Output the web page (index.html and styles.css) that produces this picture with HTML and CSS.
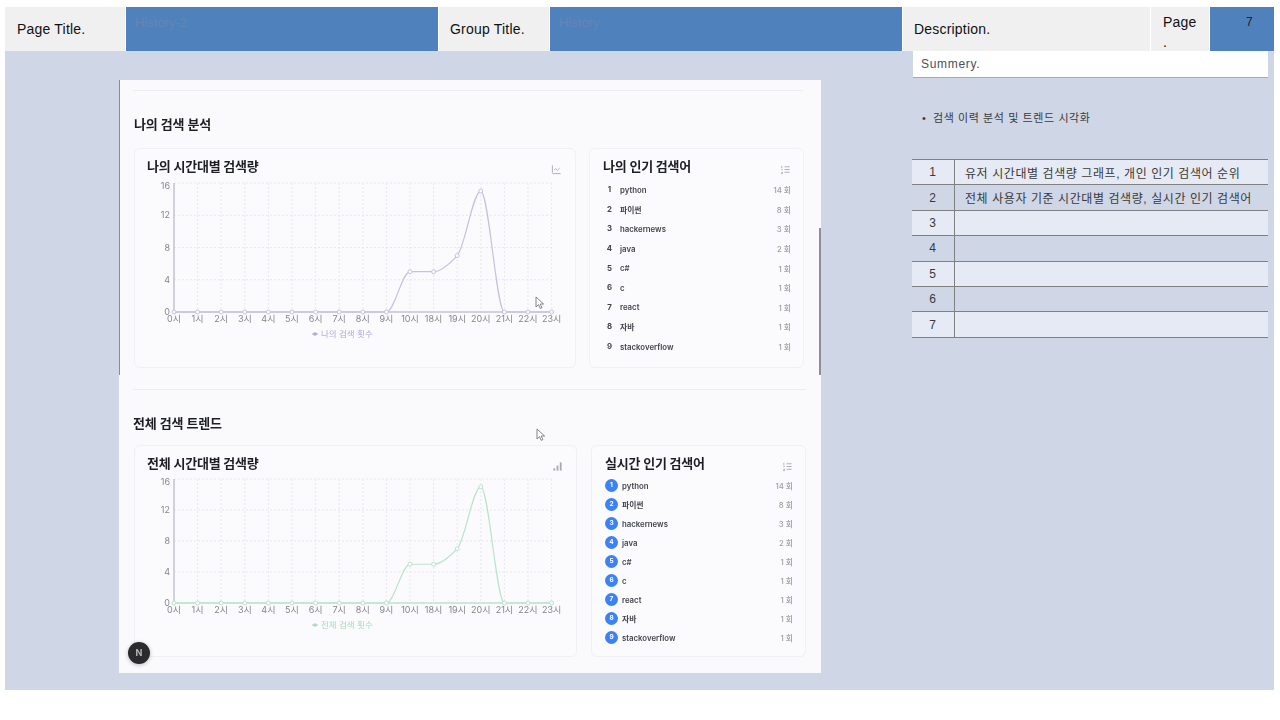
FILE: index.html
```html
<!DOCTYPE html>
<html lang="ko">
<head>
    <title>History-2</title>
    <meta charset="utf-8">
    <link rel="stylesheet" href="styles.css">
</head>
<body>
    <header class="top-bar">
        <div class="label">Page Title.</div>
        <div class="value">History-2</div>
        <div class="label label-group">Group Title.</div>
        <div class="value">History</div>
        <div class="label label-desc">Description.</div>
        <div class="label label-page">Page .</div>
        <div class="page-num">7</div>
    </header>

    <main class="sheet">
        <div class="stage">
            <div class="shot">
                <span class="shot-edge"></span>
                <span class="shot-scroll"></span>

                <hr class="rule">
                <h2 class="section-title">나의 검색 분석</h2>
                <div class="board board-my">
                    <section class="card chart-card">
                        <div class="card-head">
                            <h3>나의 시간대별 검색량</h3>
                            <svg class="icon" viewBox="0 0 24 24"><path d="M3 3v16a2 2 0 0 0 2 2h16"/><path d="m19 9-5 5-4-4-3 3"/></svg>
                        </div>
                        <svg class="chart" id="my-chart"></svg>
                    </section>
                    <section class="card list-card">
                        <div class="card-head">
                            <h3>나의 인기 검색어</h3>
                            <svg class="icon" viewBox="0 0 24 24"><path d="M10 6h11"/><path d="M10 12h11"/><path d="M10 18h11"/><path d="M4 4v5"/><path d="M3 18h3l-3 3h3"/><path d="M3 12h3"/></svg>
                        </div>
                        <ol class="rank-list" id="my-list"></ol>
                    </section>
                </div>

                <hr class="rule rule-wide">
                <h2 class="section-title section-title-all">전체 검색 트렌드</h2>
                <div class="board board-all">
                    <section class="card chart-card">
                        <div class="card-head">
                            <h3>전체 시간대별 검색량</h3>
                            <svg class="icon icon-bars" viewBox="0 0 24 24"><path d="M5 21v-5"/><path d="M12 21V10"/><path d="M19 21V3"/></svg>
                        </div>
                        <svg class="chart" id="all-chart"></svg>
                    </section>
                    <section class="card list-card">
                        <div class="card-head">
                            <h3>실시간 인기 검색어</h3>
                            <svg class="icon" viewBox="0 0 24 24"><path d="M10 6h11"/><path d="M10 12h11"/><path d="M10 18h11"/><path d="M4 4v5"/><path d="M3 18h3l-3 3h3"/><path d="M3 12h3"/></svg>
                        </div>
                        <ol class="rank-list rank-list-live" id="all-list"></ol>
                    </section>
                </div>

                <svg class="cursor cursor-a" viewBox="0 0 10 14"><path d="M1 1v10l2.5-2.4 1.7 3.8 1.7-.8-1.7-3.6H8.6z"/></svg>
                <svg class="cursor cursor-b" viewBox="0 0 10 14"><path d="M1 1v10l2.5-2.4 1.7 3.8 1.7-.8-1.7-3.6H8.6z"/></svg>
                <span class="next-badge">N</span>
            </div>
        </div>

        <aside class="side">
            <div class="summary">Summery.</div>
            <p class="note">• <span>검색 이력 분석 및 트렌드 시각화</span></p>
            <table class="steps">
                <tr><td>1</td><td>유저 시간대별 검색량 그래프, 개인 인기 검색어 순위</td></tr>
                <tr><td>2</td><td>전체 사용자 기준 시간대별 검색량, 실시간 인기 검색어</td></tr>
                <tr><td>3</td><td></td></tr>
                <tr><td>4</td><td></td></tr>
                <tr><td>5</td><td></td></tr>
                <tr><td>6</td><td></td></tr>
                <tr><td>7</td><td></td></tr>
            </table>
        </aside>
    </main>

    <script src="script.js"></script>
</body>
</html>
```

FILE: styles.css
```css
body {
    font-family: "Liberation Sans", "Noto Sans CJK KR", sans-serif;
    background-color: white;
    margin: 0;
    padding: 7px 6px 0 5px;
}
.top-bar {
    display: grid;
    grid-template-columns: 120px 312px 110px 352px 247px 58px 64px;
    column-gap: 1px;
    height: 44px;
}
.label {
    background-color: #f0f0f0;
    color: #111;
    font-size: 14px;
    line-height: 44px;
    padding-left: 12px;
    letter-spacing: 0.2px;
}
.label-group,
.label-desc {
    padding-left: 11px;
}
.label-page {
    line-height: 20px;
    padding: 5px 12px 0;
    overflow: hidden;
}
.value {
    background-color: #4f81bd;
    color: #6486b5;
    font-size: 13px;
    line-height: 32px;
    padding-left: 9px;
}
.page-num {
    background-color: #4f81bd;
    color: #222;
    font-size: 12px;
    line-height: 30px;
    padding-left: 36px;
}
.sheet {
    display: flex;
    height: 639px;
    background-color: #cfd6e6;
}
.stage {
    flex: 0 0 907px;
    padding: 29px 0 0 114px;
    box-sizing: border-box;
}
.shot {
    position: relative;
    width: 702px;
    height: 593px;
    box-sizing: border-box;
    padding: 10px 15px 0 14px;
    background-color: #fafafd;
    font-family: Inter, "Noto Sans CJK KR", sans-serif;
    filter: blur(0.5px);
}
.shot-edge {
    position: absolute;
    left: 0;
    top: 0;
    width: 1px;
    height: 295px;
    background-color: #8f8b8b;
}
.shot-scroll {
    position: absolute;
    right: 0;
    top: 148px;
    width: 2px;
    height: 147px;
    background-color: #8e8e99;
}
.rule {
    border: none;
    height: 1px;
    margin: 0 3px 0 0;
    background-color: #ecedf1;
}
.rule-wide {
    margin: 21px 0 0 0;
}
.section-title {
    margin: 23px 0 14px 1px;
    font-size: 13px;
    line-height: 20px;
    color: #1d1f25;
    letter-spacing: -0.1px;
}
.section-title-all {
    margin-bottom: 12px;
    margin-left: 0;
}
.board {
    display: grid;
    margin-left: 1px;
}
.board-my {
    grid-template-columns: 442px 215px;
    column-gap: 13px;
    height: 220px;
}
.board-all {
    grid-template-columns: 443px 215px;
    column-gap: 14px;
    height: 212px;
}
.card {
    background-color: #fbfbfe;
    border: 1px solid #f1f1f5;
    border-radius: 6px;
    box-sizing: border-box;
    padding: 7px 13px 0 12px;
}
.list-card {
    padding-left: 13px;
    padding-right: 12px;
}
.card-head {
    display: flex;
    justify-content: space-between;
    height: 22px;
}
.card-head h3 {
    margin: 0;
    font-size: 13px;
    line-height: 20px;
    color: #1d1f25;
    letter-spacing: -0.2px;
}
.icon {
    width: 11px;
    height: 11px;
    margin-top: 8px;
    fill: none;
    stroke: #a9a9b2;
    stroke-width: 2;
}
.icon-bars {
    stroke-width: 4;
}
.chart {
    display: block;
    width: 416px;
    height: 170px;
    overflow: visible;
}
.chart text {
    font-family: Inter, "Noto Sans CJK KR", sans-serif;
}
.grid-line {
    stroke: #e7e7ed;
    stroke-width: 1;
    stroke-dasharray: 2 2;
}
.axis-line {
    stroke: #c3c3d0;
    stroke-width: 1.5;
}
.tick {
    font-size: 9px;
    fill: #85858d;
}
.legend {
    font-size: 8.5px;
}
.rank-list {
    list-style: none;
    margin: 2px 0 0;
    padding: 0;
}
.rank-list li {
    display: flex;
    align-items: center;
    height: 19.6px;
    font-size: 7.8px;
    color: #43454d;
    font-weight: 600;
}
.rank {
    width: 13px;
    height: 13px;
    line-height: 13px;
    margin-right: 4px;
    text-align: center;
    font-weight: 700;
}
.term {
    flex: 1;
}
.count {
    color: #9c9ca4;
    font-weight: 500;
}
.rank-list-live {
    margin-top: 1px;
}
.rank-list-live li {
    height: 19px;
}
.rank-list-live .rank {
    border-radius: 50%;
    background-color: #3b82f6;
    color: white;
    font-size: 6.5px;
}
.cursor {
    position: absolute;
    width: 10px;
    height: 14px;
    fill: white;
    stroke: #777;
    stroke-width: 0.9;
}
.cursor-a {
    left: 416px;
    top: 216px;
}
.cursor-b {
    left: 417px;
    top: 348px;
}
.next-badge {
    position: absolute;
    left: 9px;
    top: 562px;
    width: 22px;
    height: 22px;
    border-radius: 50%;
    background-color: #2b2b2d;
    color: #b5b5b5;
    font-size: 9px;
    font-weight: 700;
    line-height: 22px;
    text-align: center;
    box-shadow: 0 1px 4px rgba(0, 0, 0, 0.25);
}
.side {
    flex: 0 0 356px;
}
.summary {
    height: 26px;
    margin-left: 1px;
    padding-left: 8px;
    line-height: 27px;
    background-color: white;
    border-bottom: 1px solid #a6a9b0;
    color: #4c4f5c;
    font-size: 12px;
    letter-spacing: 0.7px;
}
.note {
    margin: 32px 0 33px;
    padding-left: 10px;
    font-size: 11px;
    line-height: 16px;
    color: #3c3c3c;
}
.note span {
    margin-left: 4px;
    letter-spacing: 0.6px;
}
.steps {
    width: 356px;
    table-layout: fixed;
    border-collapse: collapse;
    border-top: 1px solid #808080;
    font-size: 12px;
    color: #3a3a3a;
}
.steps tr {
    height: 25.4px;
    border-bottom: 1px solid #808080;
}
.steps tr:nth-child(odd) {
    background-color: #e6eaf4;
}
.steps td {
    padding: 0 0 0 10px;
    letter-spacing: 0.58px;
    white-space: nowrap;
}
.steps td:first-child {
    width: 42px;
    padding: 0;
    text-align: center;
    border-right: 1px solid #808080;
}
```

FILE: script.js
```js
// Same numbers feed both lists and both charts
const hours = [0, 1, 2, 3, 4, 5, 6, 7, 8, 9, 10, 18, 19, 20, 21, 22, 23];
const counts = [0, 0, 0, 0, 0, 0, 0, 0, 0, 0, 5, 5, 7, 15, 0, 0, 0];
const terms = [
    ['python', 14], ['파이썬', 8], ['hackernews', 3], ['java', 2], ['c#', 1],
    ['c', 1], ['react', 1], ['자바', 1], ['stackoverflow', 1]
];

function fillList(id) {
    document.getElementById(id).innerHTML = terms.map((t, i) => `
        <li>
            <span class="rank">${i + 1}</span>
            <span class="term">${t[0]}</span>
            <span class="count">${t[1]} 회</span>
        </li>`).join('');
}

// Monotone curve, so the line doesn't overshoot between the points
function curvePath(pts) {
    const slopes = [];
    for (let i = 0; i < pts.length - 1; i++) {
        slopes.push((pts[i + 1].y - pts[i].y) / (pts[i + 1].x - pts[i].x));
    }
    const tangents = pts.map((p, i) => {
        if (i === 0) return slopes[0];
        if (i === pts.length - 1) return slopes[i - 1];
        const a = slopes[i - 1];
        const b = slopes[i];
        if (a * b <= 0) return 0;
        return 2 * a * b / (a + b);
    });
    let d = `M${pts[0].x} ${pts[0].y}`;
    for (let i = 0; i < pts.length - 1; i++) {
        const h = (pts[i + 1].x - pts[i].x) / 3;
        d += `C${pts[i].x + h} ${pts[i].y + tangents[i] * h} ${pts[i + 1].x - h} ${pts[i + 1].y - tangents[i + 1] * h} ${pts[i + 1].x} ${pts[i + 1].y}`;
    }
    return d;
}

function drawChart(id, opts) {
    const left = 27;
    const step = 23.6;
    const right = left + step * (hours.length - 1);
    const bottom = opts.top + opts.height;
    const yFor = v => bottom - v / 16 * opts.height;
    const pts = counts.map((v, i) => ({ x: left + step * i, y: yFor(v) }));
    let out = '';

    [0, 4, 8, 12, 16].forEach(v => {
        const y = yFor(v);
        if (v > 0) out += `<line class="grid-line" x1="${left}" x2="${right}" y1="${y}" y2="${y}"/>`;
        const labelY = v === 16 ? y + 6 : y + 3;
        out += `<text class="tick" x="${left - 4}" y="${labelY}" text-anchor="end">${v}</text>`;
    });
    hours.forEach((h, i) => {
        const x = left + step * i;
        if (i > 0) out += `<line class="grid-line" x1="${x}" x2="${x}" y1="${opts.top}" y2="${bottom}"/>`;
        out += `<text class="tick" x="${x}" y="${bottom + 10}" text-anchor="middle">${h}시</text>`;
    });
    out += `<line class="axis-line" x1="${left}" x2="${left}" y1="${opts.top}" y2="${bottom}"/>`;
    out += `<line x1="${left}" x2="${right}" y1="${bottom}" y2="${bottom}" stroke="${opts.axis}" stroke-width="1.5"/>`;
    out += `<path d="${curvePath(pts)}" fill="none" stroke="${opts.color}" stroke-width="1.2"/>`;
    pts.forEach(p => {
        out += `<circle cx="${p.x}" cy="${p.y}" r="2" fill="#fbfbfe" stroke="${opts.color}"/>`;
    });

    // Legend sits under the axis, centred on the plot
    const ly = bottom + 22;
    out += `<line x1="165" x2="171" y1="${ly}" y2="${ly}" stroke="${opts.legendColor}"/>`;
    out += `<circle cx="168" cy="${ly}" r="1.8" fill="${opts.legendColor}"/>`;
    out += `<text class="legend" x="174" y="${ly + 3}" fill="${opts.legendColor}">${opts.legend}</text>`;

    document.getElementById(id).innerHTML = out;
}

fillList('my-list');
fillList('all-list');
drawChart('my-chart', { top: 5, height: 129, color: '#c5c1e2', axis: '#c5c1e2', legendColor: '#aeaad6', legend: '나의 검색 횟수' });
drawChart('all-chart', { top: 4, height: 124, color: '#bce3cb', axis: '#bce3cb', legendColor: '#a5dcb9', legend: '전체 검색 횟수' });
```
